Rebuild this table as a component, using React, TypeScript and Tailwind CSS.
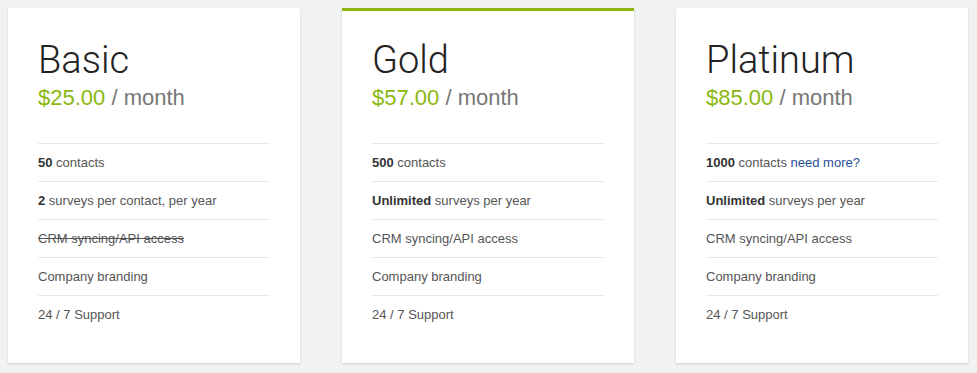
import React from "react";

type Row = React.ReactNode;

const plans: { name: string; price: string; featured?: boolean; rows: Row[] }[] = [
  {
    name: "Basic",
    price: "$25.00",
    rows: [
      <><b className="font-bold text-[#333]">50</b> contacts</>,
      <><b className="font-bold text-[#333]">2</b> surveys per contact, per year</>,
      <span className="line-through">CRM syncing/API access</span>,
      <>Company branding</>,
      <>24 / 7 Support</>,
    ],
  },
  {
    name: "Gold",
    price: "$57.00",
    featured: true,
    rows: [
      <><b className="font-bold text-[#333]">500</b> contacts</>,
      <><b className="font-bold text-[#333]">Unlimited</b> surveys per year</>,
      <>CRM syncing/API access</>,
      <>Company branding</>,
      <>24 / 7 Support</>,
    ],
  },
  {
    name: "Platinum",
    price: "$85.00",
    rows: [
      <><b className="font-bold text-[#333]">1000</b> contacts <a className="text-[#1f4e96]">need more?</a></>,
      <><b className="font-bold text-[#333]">Unlimited</b> surveys per year</>,
      <>CRM syncing/API access</>,
      <>Company branding</>,
      <>24 / 7 Support</>,
    ],
  },
];

export default function App() {
  return (
    <div className="w-[977px] h-[373px] bg-[#f1f3f2] pl-2 pr-[9px] pt-2 font-['Liberation_Sans',Arial,sans-serif]">
      <div className="grid grid-cols-3 gap-x-[42px]">
        {plans.map((p) => (
          <div
            key={p.name}
            className={`bg-white h-[355px] px-[30px] shadow-[0_1px_2px_rgba(0,0,0,0.15)] ${p.featured ? "border-t-[3px] border-[#8ab80f] pt-[27px]" : "pt-[30px]"}`}
          >
            <div className="text-[38px] leading-[44px] font-light text-[#222] font-['Roboto',sans-serif]">
              {p.name}
            </div>
            <div className="text-[22px] leading-[26px] mt-[3px] text-[#777]">
              <span className="text-[#8ab80f]">{p.price}</span> / month
            </div>
            <div className="mt-[32px]">
              {p.rows.map((r, i) => (
                <div key={i} className="border-t border-[#e8e8e8] h-[38px] flex items-center text-[13px] text-[#555]">
                  <div>{r}</div>
                </div>
              ))}
            </div>
          </div>
        ))}
      </div>
    </div>
  );
}
